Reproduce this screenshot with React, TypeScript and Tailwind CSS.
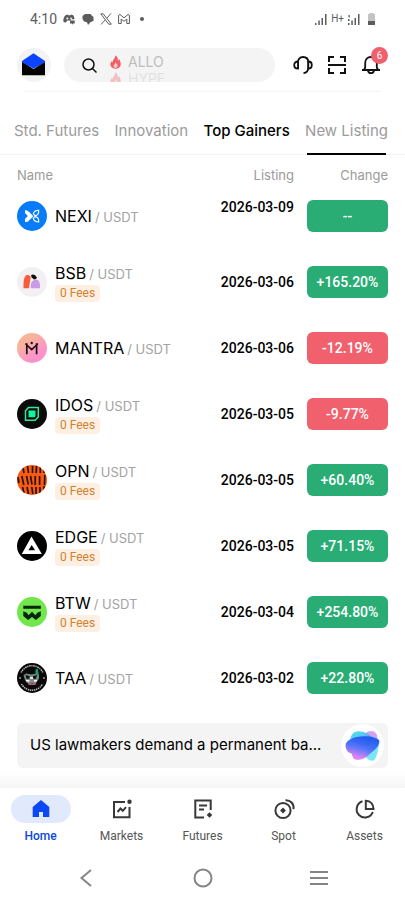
import type { ReactNode } from "react"
import clsx from "clsx"

type Coin = {
    symbol: string
    listed: string
    change: string
    noFees?: boolean
    down?: boolean
    upcoming?: boolean
    logo: ReactNode
}

const coins: Coin[] = [
    {
        symbol: "NEXI",
        listed: "2026-03-09",
        change: "--",
        upcoming: true,
        logo: (
            <>
                <circle cx="15" cy="15" r="15" fill="#087cf8" />
                <path d="M8 9.2c2 0 3 .5 4 1.6l4.3 4.4-4.3 4.2c-1 1-2 1.5-4 1.5V18l2.8-2.9L8 12z" fill="#fff" />
                <path d="M16.3 12.9c.4-2.2 2.4-3.6 5.4-3.7.2 3-1.2 5.2-3.7 5.4zM16.3 17.3c.4 2.2 2.4 3.5 5.4 3.6.2-3-1.2-5.1-3.7-5.3z" fill="none" stroke="#fff" strokeWidth="1.1" />
            </>
        ),
    },
    {
        symbol: "BSB",
        listed: "2026-03-06",
        change: "+165.20%",
        noFees: true,
        logo: (
            <>
                <circle cx="15" cy="15" r="15" fill="#f2f0f2" />
                <path d="M6.5 21.3v-4c0-5 1.5-9 3.5-9.2 3-.2 3.8 1.2 3.6 3l-1.7 10.200z" fill="#fb5a3c" />
                <path d="M14 8.2c2-1.600 4.500-.7 5.700 2.200l-.6 1.700-2.100.4-2.300-2z" fill="#111" />
                <path d="M13.8 21.3v-2.500c.2-4 2.400-6.300 5.200-6.300 2.500.3 4 2.600 4 6.300v2.500z" fill="#c99ae6" />
            </>
        ),
    },
    {
        symbol: "MANTRA",
        listed: "2026-03-06",
        change: "-12.19%",
        down: true,
        logo: (
            <>
                <defs>
                    <linearGradient id="mantra" x1="0.2" y1="0.1" x2="0.8" y2="0.9">
                        <stop offset="0.2" stopColor="#f8b49a" />
                        <stop offset="0.8" stopColor="#fb92cc" />
                    </linearGradient>
                </defs>
                <circle cx="15" cy="15" r="15" fill="url(#mantra)" />
                <path d="M8.3 11.100h1.500v10.200M21.100 11.100h-1.500v10.200M9.800 12l4.900 4.600 4.900-4.600" fill="none" stroke="#1d1117" strokeWidth="1.7" />
                <circle cx="14.7" cy="10" r="1.2" fill="#1d1117" />
            </>
        ),
    },
    {
        symbol: "IDOS",
        listed: "2026-03-05",
        change: "-9.77%",
        noFees: true,
        down: true,
        logo: (
            <>
                <circle cx="15" cy="15" r="15" fill="#0b0b0c" />
                <path d="M11.5 8.500h9.800v9.500l-3.200 3.300H8.500v-9.600z" fill="none" stroke="#2ee89c" strokeWidth="1.5" />
                <path d="M12 11.500h6.500v5.800l-1 1H11.500v-6z" fill="#10f59e" />
            </>
        ),
    },
    {
        symbol: "OPN",
        listed: "2026-03-05",
        change: "+60.40%",
        noFees: true,
        logo: (
            <>
                <defs>
                    <clipPath id="opn">
                        <circle cx="15" cy="15" r="15" />
                    </clipPath>
                </defs>
                <g clipPath="url(#opn)">
                    <path d="M0 0h30v30H0z" fill="#f95a14" />
                    <path
                        d="M6 3l1 5M10.500 1l1 7M15.500 1v7M19.500 1l-.3 7M23.300 1v7M27 3v5M.8 12l1.200 6M4.800 11l2 9M9.500 11l1.800 8.500M13.500 11l1.500 8.500M18.200 11v9M22.600 11v9M27.800 10l-.3 10M5.500 22l1.500 6M10 22l1.500 7M14.800 22l1 7M19 22v7M23 22v7M27 21v6"
                        stroke="#29140c"
                        strokeWidth="1.7"
                        fill="none"
                    />
                </g>
            </>
        ),
    },
    {
        symbol: "EDGE",
        listed: "2026-03-05",
        change: "+71.15%",
        noFees: true,
        logo: (
            <>
                <circle cx="15" cy="15" r="15" fill="#020202" />
                <path fillRule="evenodd" d="M14.5 5.500L24.800 23H4.800zM14.700 14l-3.300 5.300h6.700z" fill="#fff" />
            </>
        ),
    },
    {
        symbol: "BTW",
        listed: "2026-03-04",
        change: "+254.80%",
        noFees: true,
        logo: (
            <>
                <circle cx="15" cy="15" r="15" fill="#72e74b" />
                <path d="M6.3 8.700h17.500v3.100H6.300zM6.300 14.300l3.500 1.500 1.800 2.400 3.400-3.400 3.400 3.400 1.900-2.400 3.500-1.500v4.600l-4.900 4-3.900-2.900-3.900 2.900-4.800-4z" fill="#08250e" />
            </>
        ),
    },
    {
        symbol: "TAA",
        listed: "2026-03-02",
        change: "+22.80%",
        logo: (
            <>
                <circle cx="15" cy="15" r="15" fill="#090909" />
                <path d="M4.2 9.500a12 12 0 0 1 21.600 0M4.500 21a12 12 0 0 0 21 0" fill="none" stroke="#bdbdbd" strokeWidth="1.5" strokeDasharray="1.2 .7 1.6 .7" />
                <circle cx="3" cy="15" r=".8" fill="#fff" />
                <circle cx="27" cy="15" r=".8" fill="#fff" />
                <path d="M6.5 12l3-1.500 5 1 5-1 2.500 1v4l-3 4.500h-9l-2-3z" fill="#7d8b88" />
                <path d="M18.500 6.500l2-1 1 4v4l-3-2z" fill="#239a70" />
                <path d="M8.500 12l4 1v2.500l-3 .5zM16 13l4-1-1 4-3-.5z" fill="#151515" />
                <path d="M9 17.500l3.500.5M17 18l3-.5M13 15h3" stroke="#fff" strokeWidth="1.5" />
                <path d="M11 20.500q4 1.600 8 0" fill="none" stroke="#bd6c8b" strokeWidth="1.5" />
            </>
        ),
    },
]

const tabs = ["Std. Futures", "Innovation", "Top Gainers", "New Listing"]

const navItems = [
    {
        label: "Home",
        icon: <path d="M12 3l8.300 7v10h-6.300v-5h-4v5H3.700V10z" fill="#0b49f5" />,
    },
    {
        label: "Markets",
        icon: (
            <>
                <path d="M15 5H4v15.300h15.500V10M7.500 15l3-3.500 2.300 2.300 3.200-3.600" fill="none" stroke="#38383a" strokeWidth="2" />
                <circle cx="19.5" cy="4.8" r="2.2" fill="#38383a" />
            </>
        ),
    },
    {
        label: "Futures",
        icon: (
            <>
                <path d="M13 20.500H4.300V3.500h15.400V13M8 8.500h8M8 12.500h5" fill="none" stroke="#38383a" strokeWidth="2" />
                <path d="M18.500 15.200l2.800 2.800-2.800 2.800-2.800-2.800z" fill="#38383a" />
            </>
        ),
    },
    {
        label: "Spot",
        icon: (
            <>
                <circle cx="11" cy="13.5" r="7.6" fill="none" stroke="#38383a" strokeWidth="2" />
                <path d="M11 10.600l2.900 2.900-2.900 2.900-2.900-2.900z" fill="#38383a" />
                <path d="M13.500 3.200c5-.2 8.700 3.400 8 9" fill="none" stroke="#38383a" strokeWidth="2" />
            </>
        ),
    },
    {
        label: "Assets",
        icon: (
            <>
                <path d="M9.500 4.300A8.300 8.300 0 1 0 19.800 15" fill="none" stroke="#38383a" strokeWidth="2" />
                <path d="M12.800 3.800v8.300h7.700c0-4.800-3-8-7.700-8.300z" fill="none" stroke="#38383a" strokeWidth="2" />
            </>
        ),
    },
]

function StatusBar() {
    return (
        <div className="flex h-[38px] items-center justify-between px-[30px] text-[#5c5c5c]">
            <div className="flex items-center gap-[6px]">
                <span className="font-[Roboto] text-sm">4:10</span>
                <svg className="h-3 w-3" viewBox="0 0 12 12" fill="currentColor">
                    <path d="M2.500 2.300L5 1.500l.5.800h2L8 1.500l2.300.8c.8 1.200 1.200 2.500 1.300 4H7.800v1.200H4.500L2.300 9.800.3 8.500C.2 6 .8 4 2.500 2.300z" />
                    <path d="M7 7.500h4.700v3h-1.500L9 11.800v-1.300H7z" />
                    <circle cx="4.3" cy="5.5" r="1" fill="#fff" />
                    <circle cx="8" cy="5.3" r=".9" fill="#fff" />
                </svg>
                <svg className="ml-px h-3 w-3" viewBox="0 0 12 12" fill="currentColor">
                    <path d="M3 1h5.500l1 1.300L11.500 4v4L8.700 9 6 12 5 9.300 2 8.500.5 6V3z" />
                </svg>
                <svg className="h-3 w-3" viewBox="0 0 12 12" fill="none" stroke="currentColor">
                    <path d="M.8.8h2.500l8 10.400H8.700zM11 .5L6.800 5.200M5.200 7L1 11.500" />
                </svg>
                <svg className="h-3 w-3" viewBox="0 0 12 12" fill="none" stroke="currentColor">
                    <path d="M.6 10.500V2.300L2 1.500l4 3.300 4-3.300 1.400.8v8.200H8.800V6L6 8.300 3.200 6v4.500z" />
                </svg>
                <span className="ml-1 h-1 w-1 rounded-full bg-[#5c5c5c]" />
            </div>
            <div className="flex items-center gap-1">
                <svg className="h-3 w-3" viewBox="0 0 12 12" fill="currentColor">
                    <path d="M0 10h1.500v2H0zM3.300 7.500h1.500V12H3.300zM6.500 5H8v7H6.500zM10 1h1.500v11H10z" />
                </svg>
                <span className="font-[Roboto] text-[10px] leading-3">H+</span>
                <svg className="h-3 w-3" viewBox="0 0 12 12" fill="currentColor">
                    <path d="M0 10h1.500v2H0zM0 6h1.500v2H0zM.5 2h1.300v2.500H.5zM3.300 7.500h1.500V12H3.300zM6.500 5H8v7H6.500zM10 1h1.500v11H10z" />
                </svg>
                <svg className="ml-1 h-3 w-[7px]" viewBox="0 0 7 12">
                    <path d="M1.500 0h4v1H7v11H0V1h1.500z" fill="#c4c4c4" />
                    <path d="M0 8h7v4H0z" fill="#5c5c5c" />
                </svg>
            </div>
        </div>
    )
}

function Flame() {
    return (
        <svg className="h-[14px] w-[11px]" viewBox="0 0 11 14">
            <path d="M5.300.3c3 2 2.300 4 3 5.400.5-.4.8-1 .9-1.700 2.600 4.500 2.200 9.500-3.700 9.800C.4 13.900-.8 9.200 1.500 6c.2.8.5 1.300 1.100 1.600C2.200 4.500 5.400 3.500 5.300.3z" fill="#ee5f68" />
            <path d="M5.600 7.300c1.500 1.800 2.400 2.700 1.900 4.400-.8 1.700-3.600 1.600-4-.2-.2-1.700 1.800-2.200 2.100-4.200z" fill="#f8c3c5" />
        </svg>
    )
}

function Header() {
    return (
        <header>
            <div className="flex items-center gap-3 px-4 pt-[9px]">
                <a href="#" aria-label="Profile" className="shrink-0">
                    <svg className="h-9 w-9" viewBox="0 0 36 36">
                        <circle cx="18" cy="18" r="17" fill="#f3f3f3" />
                        <path d="M6 14.500L17.500 22 29 14.500v13.700H6z" fill="#020202" />
                        <path d="M17.500 6.300L29 14v1.200L17.500 21.500 6 15.200V14z" fill="#0b43ff" />
                    </svg>
                </a>
                <button aria-label="Search" className="flex h-[34px] flex-1 overflow-hidden rounded-full bg-[#f4f4f4] pl-[18px] text-left">
                    <svg className="mt-[10px] h-[15px] w-[15px]" viewBox="0 0 15 15" fill="none" stroke="#111" strokeWidth="1.5">
                        <circle cx="6.5" cy="6.5" r="5.5" />
                        <path d="M10.500 10.500l4 4" />
                    </svg>
                    <span className="ml-[13px] flex flex-col pt-[5px] font-[Inter] text-sm leading-[17px] text-[#bdbdbd]">
                        <span className="flex items-center gap-[7px]">
                            <Flame />
                            ALLO
                        </span>
                        <span className="flex items-center gap-[7px] opacity-35">
                            <Flame />
                            HYPE
                        </span>
                    </span>
                </button>
                <div className="flex items-center gap-[14px] pr-2 pl-[6px]">
                    <button aria-label="Support">
                        <svg className="h-5 w-5" viewBox="0 0 20 20" fill="none" stroke="#111" strokeWidth="1.8">
                            <path d="M5 14V7.500C5 4 7 2 10 2s5.300 2 5.300 5.500v5c0 3-1.500 5.300-4.800 5.700" />
                            <path d="M5 6.500C2.700 6.500 1.200 8 1.200 10S2.700 13.700 5 13.700zM15.300 6.500c2.200 0 3.500 1.500 3.500 3.500s-1.300 3.700-3.500 3.700z" fill="#fff" />
                        </svg>
                    </button>
                    <button aria-label="Scan">
                        <svg className="h-5 w-5" viewBox="0 0 20 20" fill="none" stroke="#111" strokeWidth="2">
                            <path d="M2 7V2h5M13 2h5v5M18 13v5h-5M7 18H2v-5M1 10h18" />
                        </svg>
                    </button>
                    <button aria-label="Notifications" className="relative">
                        <svg className="h-5 w-5" viewBox="0 0 20 20" fill="none" stroke="#111" strokeWidth="1.8">
                            <path d="M1 15h18M3 15l1.200-2.500V8C4.200 4.500 6.500 2 10 2s5.800 2.500 5.800 6v4.500L17 15M7 15.500c.3 1.800 1.400 2.700 3 2.700s2.700-.9 3-2.700" />
                        </svg>
                        <span className="absolute -top-2 right-[-7px] flex h-[17px] w-[17px] items-center justify-center rounded-full bg-[#f0606d] font-[Roboto] text-[10px] text-white">
                            6
                        </span>
                    </button>
                </div>
            </div>
            <div className="mx-6 mt-2 h-px bg-[#f4f4f4]" />
        </header>
    )
}

function CoinRow({ coin }: { coin: Coin }) {
    return (
        <tr className="h-[66px]">
            <td className="p-0">
                <div className="flex items-center gap-2">
                    <svg className="h-[30px] w-[30px] shrink-0" viewBox="0 0 30 30">
                        {coin.logo}
                    </svg>
                    <div className="flex flex-col items-start gap-px">
                        <div className="flex items-baseline gap-[3px] text-[13px] leading-5 text-[#a3a3a3]">
                            <span className="text-base leading-5 text-black">{coin.symbol}</span>
                            <span>/ USDT</span>
                        </div>
                        {coin.noFees && (
                            <span className="rounded bg-[#fdf0e3] px-[5px] font-[Roboto] text-xs leading-[17px] text-[#d0812f]">
                                0 Fees
                            </span>
                        )}
                    </div>
                </div>
            </td>
            <td className={clsx("p-0 text-right font-[Roboto] text-sm leading-5 font-medium", coin.upcoming && "pb-[18px]")}>
                {coin.listed}
            </td>
            <td className="w-[94px] p-0 pl-[13px]">
                <div
                    className={clsx(
                        "flex h-8 items-center justify-center rounded-md font-[Roboto] text-sm font-medium text-white",
                        coin.down ? "bg-[#f0616d]" : "bg-[#2aad75]",
                    )}
                >
                    {coin.change}
                </div>
            </td>
        </tr>
    )
}

function AssistantLogo() {
    return (
        <svg className="h-[43px] w-[43px]" viewBox="0 0 42 42">
            <defs>
                <linearGradient id="blob" x1="0.65" y1="0" x2="0.3" y2="1">
                    <stop offset="0.1" stopColor="#2257ee" />
                    <stop offset="0.5" stopColor="#4a6cf8" />
                    <stop offset="0.9" stopColor="#e07cf0" />
                </linearGradient>
                <linearGradient id="aqua" x1="0" y1="0" x2="1" y2="0.6">
                    <stop offset="0" stopColor="#3edfe6" />
                    <stop offset="1" stopColor="#4aa4fa" />
                </linearGradient>
            </defs>
            <path d="M24 9c3-3 8-3 10 0 2 2 2 6 1 9l-9-3z" fill="#cf8df5" opacity=".85" />
            <path d="M9 17c0-6 3-10 8-10 6 0 11 3 15 8l-6 8z" fill="url(#aqua)" opacity=".9" />
            <path d="M31 12c4 1 7 4 6 8-1 6-2 15-6 16-3 0-6-2-8-5z" fill="#5fe3f2" opacity=".85" />
            <path d="M4.500 21c0-5 8-9 18-9 8 0 15 2 15 5 0 4-4 8-8 11-4 4-8 7-13 7-5 0-5-3-6-6-4-1-6-4-6-8z" fill="url(#blob)" opacity=".94" />
        </svg>
    )
}

export default function App() {
    return (
        <div className="flex min-h-screen flex-col bg-white font-[Inter,sans-serif] text-black">
            <StatusBar />
            <Header />

            {/* Market tabs */}
            <nav className="mt-4 flex justify-between border-b border-[#f2f2f2] pr-[17px] pl-[14px]">
                {tabs.map((tab) => (
                    <a
                        key={tab}
                        href="#"
                        className={clsx(
                            "relative flex h-[46px] items-center text-[15px] whitespace-nowrap",
                            tab === "Top Gainers" ? "font-medium text-black" : "text-[#9b9b9b]",
                        )}
                    >
                        {tab}
                        {tab === "New Listing" && <span className="absolute inset-x-[2px] -bottom-px h-[2px] bg-black" />}
                    </a>
                ))}
            </nav>

            <main className="flex-1 px-[17px]">
                <table className="w-full border-collapse">
                    <thead>
                        <tr className="h-7 text-[13px] leading-4 text-[#9b9b9b]">
                            <th className="p-0 pt-3 text-left font-normal">Name</th>
                            <th className="p-0 pt-3 text-right font-normal">Listing</th>
                            <th className="p-0 pt-3 text-right font-normal">Change</th>
                        </tr>
                    </thead>
                    <tbody>
                        {coins.map((coin) => (
                            <CoinRow key={coin.symbol} coin={coin} />
                        ))}
                    </tbody>
                </table>

                {/* News ticker */}
                <div className="mt-3 flex h-[45px] items-center justify-between rounded-md bg-[#f4f4f4] pr-1 pl-[13px]">
                    <a href="#" className="truncate text-[15px]">
                        US lawmakers demand a permanent ba...
                    </a>
                    <button aria-label="Assistant" className="shrink-0 rounded-full bg-white">
                        <AssistantLogo />
                    </button>
                </div>
            </main>

            <div className="mt-1 h-4 bg-linear-to-b from-white to-[#f5f5f5]" />

            {/* Bottom navigation */}
            <nav className="grid grid-cols-5 pt-[7px] font-[Roboto] text-xs text-[#555]">
                {navItems.map((item) => (
                    <a key={item.label} href="#" className="flex flex-col items-center gap-[3px]">
                        <span
                            className={clsx(
                                "flex h-7 w-[60px] items-center justify-center rounded-full",
                                item.label === "Home" && "bg-[#e1e9fc]",
                            )}
                        >
                            <svg className="h-6 w-6" viewBox="0 0 24 24">
                                {item.icon}
                            </svg>
                        </span>
                        <span className={clsx("leading-5", item.label === "Home" && "font-medium text-[#0b49d8]")}>
                            {item.label}
                        </span>
                    </a>
                ))}
            </nav>

            {/* System buttons */}
            <div className="flex h-[54px] items-center justify-between px-[76px] pt-[10px] text-[#858585]">
                <button aria-label="Back">
                    <svg className="h-5 w-5" viewBox="0 0 20 20" fill="none" stroke="currentColor" strokeWidth="2">
                        <path d="M15 2L5.500 10l9.500 8" />
                    </svg>
                </button>
                <button aria-label="Home screen">
                    <svg className="h-5 w-5" viewBox="0 0 20 20" fill="none" stroke="currentColor" strokeWidth="2">
                        <circle cx="10" cy="10" r="8.5" />
                    </svg>
                </button>
                <button aria-label="Recent apps">
                    <svg className="h-5 w-5" viewBox="0 0 20 20" fill="none" stroke="currentColor" strokeWidth="2">
                        <path d="M1 4h18M1 10h18M1 16h18" />
                    </svg>
                </button>
            </div>
        </div>
    )
}
